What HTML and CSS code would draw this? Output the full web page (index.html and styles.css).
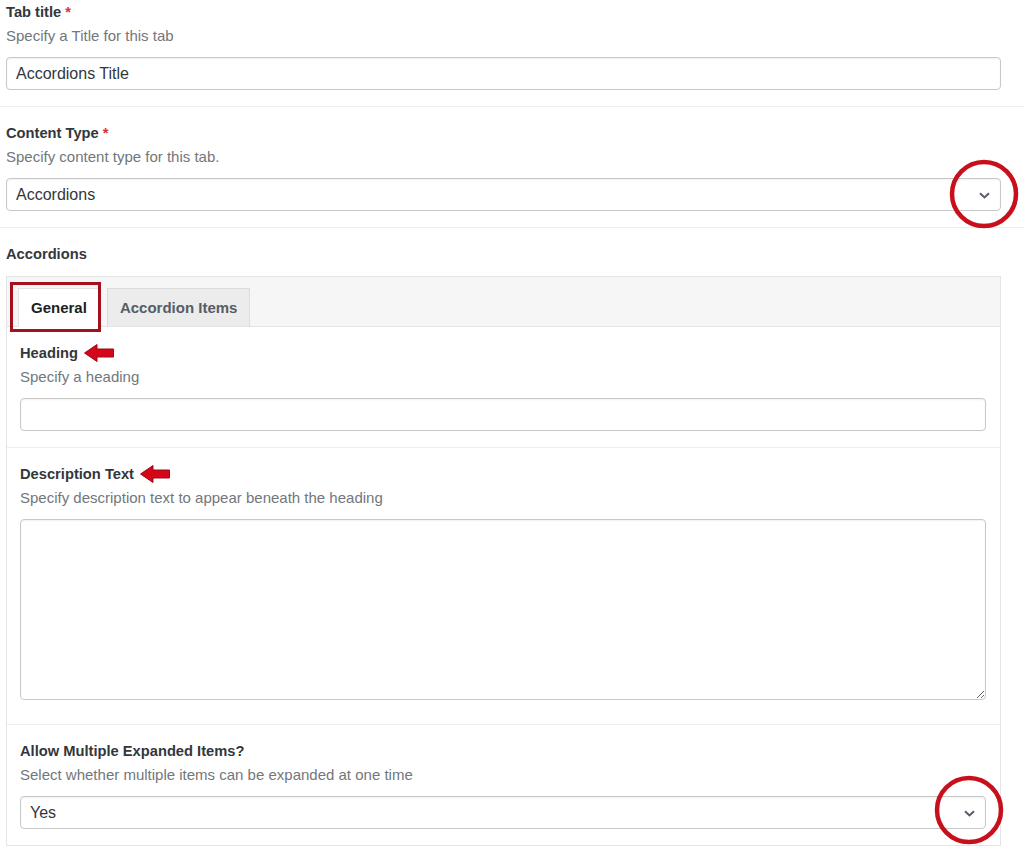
FILE: index.html
```html
<!DOCTYPE html>
<html lang="en">
<head>
    <meta charset="UTF-8">
    <meta name="viewport" content="width=device-width, initial-scale=1.0">
    <title>Tab Settings</title>
    <link rel="stylesheet" href="styles.css">
</head>
<body>
    <div class="settings">
        <div class="field">
            <label class="field-label">Tab title <span class="required">*</span></label>
            <p class="field-desc">Specify a Title for this tab</p>
            <input type="text" class="text-input" value="Accordions Title">
        </div>

        <div class="field">
            <label class="field-label">Content Type <span class="required">*</span></label>
            <p class="field-desc">Specify content type for this tab.</p>
            <div class="select-wrap">
                <select class="select-input">
                    <option>Accordions</option>
                </select>
                <svg class="chevron" width="11" height="7" viewBox="0 0 11 7"><path d="M1 1.2 L5.5 5.4 L10 1.2" fill="none" stroke="#555d66" stroke-width="2"/></svg>
                <!-- annotation -->
                <svg class="mark-circle" width="72" height="72" viewBox="0 0 72 72"><circle cx="36" cy="36" r="32" fill="none" stroke="#c8101d" stroke-width="4.5"/></svg>
            </div>
        </div>

        <div class="field field-last">
            <label class="field-label">Accordions</label>
            <div class="tab-box">
                <div class="tab-header">
                    <div class="tab tab-active">General<span class="mark-box"></span></div>
                    <div class="tab">Accordion Items</div>
                </div>

                <div class="tab-panel">
                    <div class="field inner">
                        <label class="field-label">Heading
                            <svg class="mark-arrow" width="30" height="18" viewBox="0 0 30 18"><polygon points="0.5,9 13,0.5 13,5 29.5,5 29.5,13 13,13 13,17.5" fill="#d3061a" stroke="#9e0a14" stroke-width="1"/></svg>
                        </label>
                        <p class="field-desc">Specify a heading</p>
                        <input type="text" class="text-input">
                    </div>

                    <div class="field inner">
                        <label class="field-label">Description Text
                            <svg class="mark-arrow" width="30" height="18" viewBox="0 0 30 18"><polygon points="0.5,9 13,0.5 13,5 29.5,5 29.5,13 13,13 13,17.5" fill="#d3061a" stroke="#9e0a14" stroke-width="1"/></svg>
                        </label>
                        <p class="field-desc">Specify description text to appear beneath the heading</p>
                        <textarea class="text-area"></textarea>
                    </div>

                    <div class="field inner field-last">
                        <label class="field-label">Allow Multiple Expanded Items?</label>
                        <p class="field-desc">Select whether multiple items can be expanded at one time</p>
                        <div class="select-wrap">
                            <select class="select-input">
                                <option>Yes</option>
                                <option>No</option>
                            </select>
                            <svg class="chevron" width="11" height="7" viewBox="0 0 11 7"><path d="M1 1.2 L5.5 5.4 L10 1.2" fill="none" stroke="#555d66" stroke-width="2"/></svg>
                            <svg class="mark-circle mark-circle-low" width="72" height="72" viewBox="0 0 72 72"><circle cx="36" cy="36" r="32" fill="none" stroke="#c8101d" stroke-width="4.5"/></svg>
                        </div>
                    </div>
                </div>
            </div>
        </div>
    </div>
</body>
</html>
```

FILE: styles.css
```css
* {
    margin: 0;
    padding: 0;
    box-sizing: border-box;
}

body {
    background-color: #ffffff;
    font-family: "Liberation Sans", Arial, sans-serif;
    color: #23282d;
    width: 1024px;
}

.field {
    padding: 16px 23px 16px 6px;
    border-bottom: 1px solid #eeeeee;
}

.field:first-child {
    padding-top: 2px;
}

.field-last {
    border-bottom: none;
}

.field-label {
    display: flex;
    align-items: center;
    font-size: 14.7px;
    font-weight: bold;
    line-height: 20px;
    color: #32373c;
}

.required {
    color: #dc3232;
    margin-left: 4px;
}

.field-desc {
    font-size: 15px;
    line-height: 20px;
    color: #72777c;
    margin-top: 4px;
}

.text-input,
.select-input {
    display: block;
    width: 100%;
    height: 33px;
    margin-top: 11px;
    padding: 0 9px;
    border: 1px solid #c8c8c8;
    border-radius: 4px;
    background: #fff;
    font-family: "Liberation Sans", Arial, sans-serif;
    font-size: 16px;
    color: #32373c;
    box-shadow: inset 0 1px 2px rgba(0, 0, 0, 0.06);
    outline: none;
}

.select-wrap {
    position: relative;
}

.select-input {
    appearance: none;
    -webkit-appearance: none;
}

.chevron {
    position: absolute;
    right: 11px;
    top: 14px;
    pointer-events: none;
}

.text-area {
    display: block;
    width: 100%;
    height: 181px;
    margin-top: 11px;
    margin-bottom: 8px;
    border: 1px solid #c8c8c8;
    border-radius: 4px;
    box-shadow: inset 0 1px 2px rgba(0, 0, 0, 0.06);
    font-family: "Liberation Sans", Arial, sans-serif;
    outline: none;
}

/* tabbed box */
.tab-box {
    margin-top: 12px;
    border: 1px solid #e2e4e7;
}

.tab-header {
    display: flex;
    gap: 7px;
    padding: 11px 11px 0;
    background-color: #f6f6f6;
    border-bottom: 1px solid #e2e4e7;
}

.tab {
    position: relative;
    height: 39px;
    line-height: 38px;
    padding: 0 12px;
    margin-bottom: -1px;
    font-size: 15px;
    font-weight: bold;
    color: #555d66;
    background-color: #ececec;
    border: 1px solid #dcdcdc;
    border-bottom-color: #e2e4e7;
}

.tab-active {
    color: #1e1e1e;
    background-color: #ffffff;
    border-color: #e2e4e7;
    border-bottom-color: #ffffff;
}

.field.inner {
    padding: 16px 14px 16px 13px;
}

/* annotations */
.mark-box {
    position: absolute;
    left: -9px;
    right: -2px;
    top: -7px;
    bottom: -6px;
    border: 3px solid #a3111c;
    z-index: 2;
}

.mark-arrow {
    margin-left: 6px;
}

.mark-circle {
    position: absolute;
    right: -19px;
    top: -20px;
    pointer-events: none;
}

.mark-circle-low {
    right: -19px;
    top: -22px;
}
```
